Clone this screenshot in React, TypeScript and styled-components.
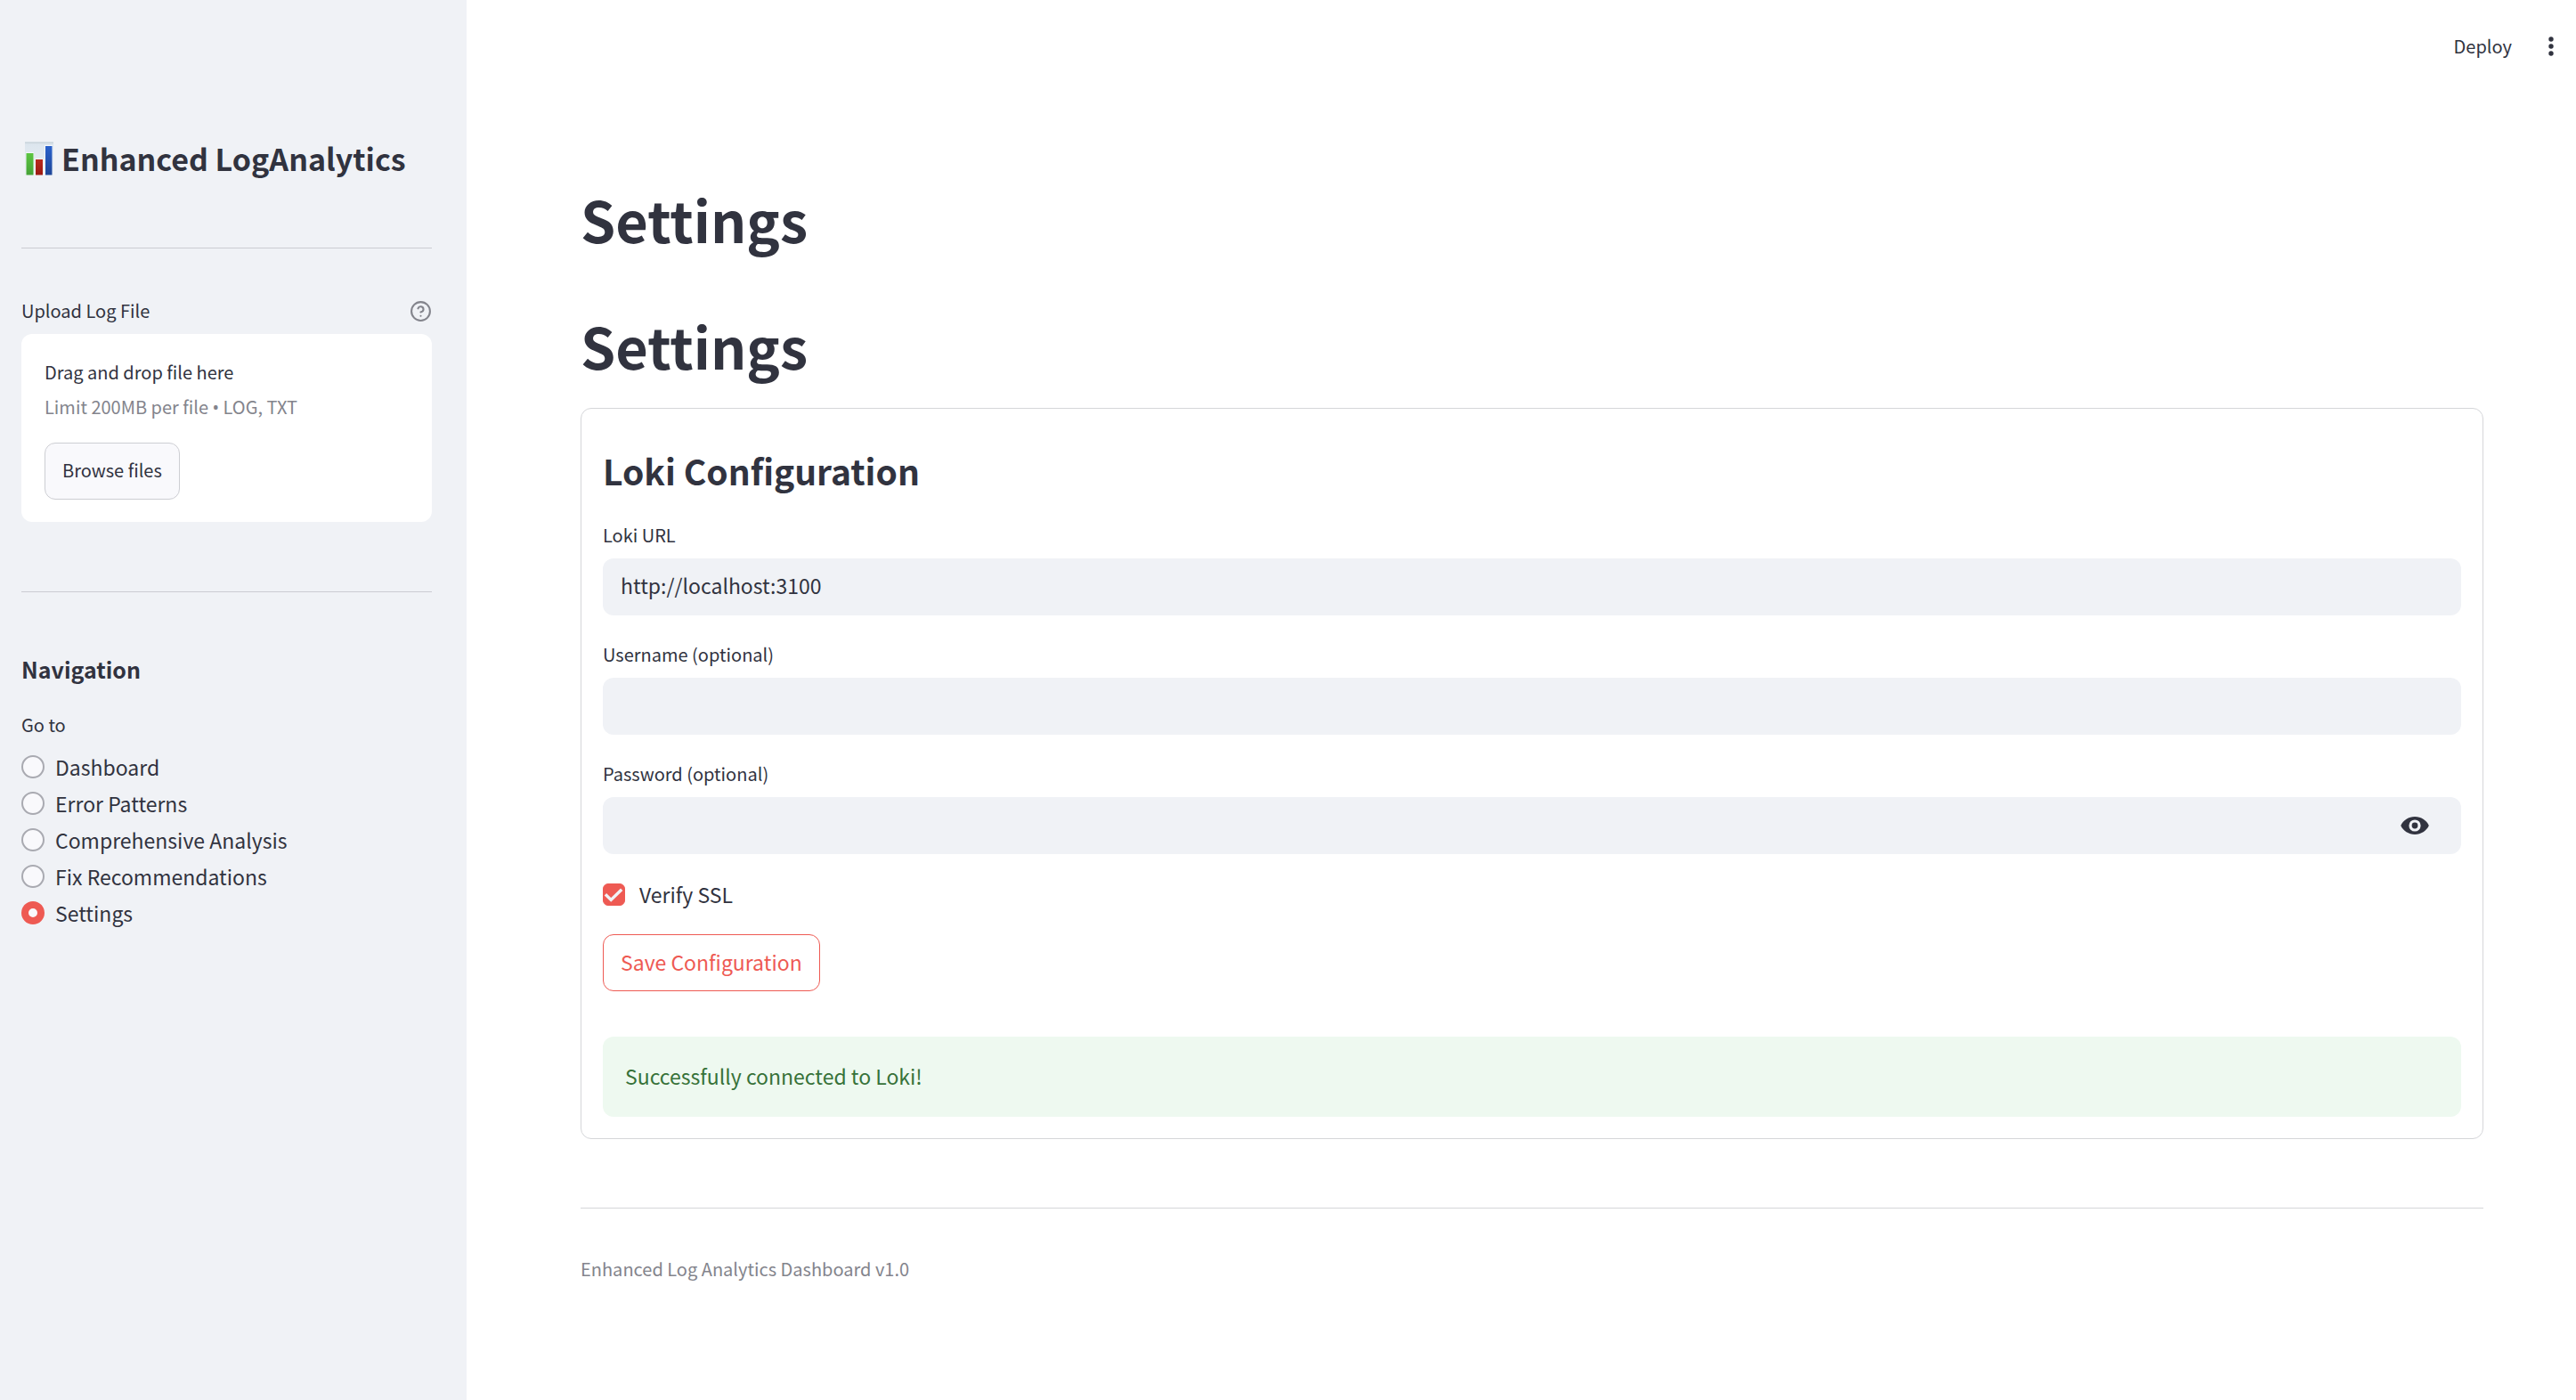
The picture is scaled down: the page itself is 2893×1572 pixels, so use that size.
import React, { useState } from "react";
import styled, { createGlobalStyle } from "styled-components";

const ink = "#31333f";
const muted = "#83848c";
const panel = "#f0f2f6";
const accent = "#ee5a53";
const line = "#d5d6d9";

const GlobalStyle = createGlobalStyle`
  *, *::before, *::after { box-sizing: border-box; }
  body {
    margin: 0;
    background: #ffffff;
    color: ${ink};
    font-family: "Noto Sans CJK SC", "Noto Sans", sans-serif;
    font-size: 23px;
    line-height: 36px;
  }
  h1, h2, h3, p { margin: 0; }
  button, input { font: inherit; color: inherit; }
`;

const Shell = styled.div`
  display: flex;
  min-height: 100vh;
`;

const Sidebar = styled.aside`
  flex: none;
  width: 524px;
  padding: 155px 39px 64px 24px;
  background: ${panel};
`;

const Brand = styled.h2`
  display: flex;
  align-items: center;
  gap: 9px;
  padding-left: 4px;
  font-size: 34px;
  line-height: 46px;
  font-weight: 600;
  white-space: nowrap;
`;

const Rule = styled.hr<{ $above: number; $below: number; $dark?: boolean }>`
  height: 1px;
  border: 0;
  margin: ${(p) => p.$above}px 0 ${(p) => p.$below}px;
  background: ${(p) => (p.$dark ? "#cbccd2" : line)};
`;

const LabelRow = styled.div`
  display: flex;
  justify-content: space-between;
  align-items: center;
  margin-bottom: 9px;
`;

const SmallLabel = styled.label`
  font-size: 20px;
  line-height: 34px;
`;

const IconButton = styled.button`
  display: flex;
  align-items: center;
  justify-content: center;
  padding: 0;
  border: 0;
  background: none;
  cursor: pointer;
`;

const Dropzone = styled.section`
  display: flex;
  flex-direction: column;
  align-items: flex-start;
  gap: 5px;
  padding: 26px 26px 25px;
  border-radius: 12px;
  background: #ffffff;
`;

const SmallText = styled.p<{ $muted?: boolean }>`
  font-size: 20px;
  line-height: 34px;
  color: ${(p) => (p.$muted ? muted : ink)};
`;

const Bullet = styled.span`
  font-family: "Noto Sans", sans-serif;
  line-height: 1;
`;

const Button = styled.button<{ $small?: boolean; $accent?: boolean }>`
  height: 64px;
  padding: 0 19px 3px;
  border: 1px solid ${(p) => (p.$accent ? accent : "#cdced3")};
  border-radius: 12px;
  background: ${(p) => (p.$accent ? "#ffffff" : "#f9f9fc")};
  color: ${(p) => (p.$accent ? accent : ink)};
  font-size: ${(p) => (p.$small ? 20 : 23)}px;
  cursor: pointer;
`;

const BrowseRow = styled.div`
  padding-top: 18px;
`;

const NavTitle = styled.h3`
  margin-bottom: 28px;
  font-size: 25px;
  line-height: 36px;
  font-weight: 600;
`;

const RadioGroup = styled.fieldset`
  display: flex;
  flex-direction: column;
  gap: 5px;
  margin: 0;
  padding: 0;
  border: 0;
`;

const Legend = styled.legend`
  margin-bottom: 12px;
  padding: 0;
  font-size: 20px;
  line-height: 34px;
`;

const Choice = styled.label<{ $gap: number }>`
  display: flex;
  align-items: center;
  align-self: flex-start;
  gap: ${(p) => p.$gap}px;
  cursor: pointer;
`;

const Radio = styled.input`
  appearance: none;
  width: 26px;
  height: 26px;
  margin: 0;
  border: 2px solid #a9aab1;
  border-radius: 50%;
  background: #f9f9fc;
  &:checked { border: 8px solid ${accent}; }
`;

const Main = styled.main`
  flex: 1;
  min-width: 0;
`;

const Toolbar = styled.header`
  display: flex;
  justify-content: flex-end;
  align-items: center;
  gap: 28px;
  height: 104px;
  padding-right: 12px;
`;

const DeployButton = styled(IconButton)`
  font-size: 20px;
  line-height: 34px;
`;

const MenuButton = styled(IconButton)`
  width: 32px;
  height: 32px;
`;

const Content = styled.div`
  padding: 70px 104px 64px 128px;
`;

const PageTitle = styled.h1`
  padding: 30px 0 28px;
  font-size: 63px;
  line-height: 84px;
  font-weight: 700;
`;

const Card = styled.form`
  display: flex;
  flex-direction: column;
  gap: 27px;
  padding: 24px;
  border: 1px solid ${line};
  border-radius: 12px;
`;

const CardTitle = styled.h2`
  padding: 21px 0 5px;
  font-size: 39px;
  line-height: 48px;
  font-weight: 600;
`;

const Field = styled.div`
  display: flex;
  flex-direction: column;
  gap: 9px;
`;

const InputBox = styled.div`
  display: flex;
  align-items: center;
  height: 64px;
  padding-right: 36px;
  border-radius: 12px;
  background: ${panel};
`;

const TextInput = styled.input`
  flex: 1;
  min-width: 0;
  height: 64px;
  padding: 0 20px 4px;
  border: 0;
  outline: 0;
  background: none;
`;

const CheckBox = styled.span`
  display: grid;
  place-items: center;
  > * { grid-area: 1 / 1; }
  svg { pointer-events: none; }
`;

const CheckInput = styled.input`
  appearance: none;
  width: 25px;
  height: 25px;
  margin: 0;
  border: 1px solid #a3a4ab;
  border-radius: 6px;
  &:checked { border-color: ${accent}; background: ${accent}; }
`;

const Actions = styled.div`
  display: flex;
`;

const Alert = styled.div`
  margin-top: 24px;
  padding: 26px 25px 28px;
  border-radius: 12px;
  background: #eef9f0;
  color: #377239;
`;

function ChartIcon() {
  return (
    <svg width="32" height="38" viewBox="0 0 32 38" aria-hidden="true">
      <defs>
        <linearGradient id="sheet" x1="0" y1="0" x2="0" y2="1">
          <stop offset="0" stopColor="#d6dfe6" />
          <stop offset="0.1" stopColor="#dde6ee" />
          <stop offset="1" stopColor="#ebf0f5" />
        </linearGradient>
        <linearGradient id="green" x1="0" y1="0" x2="0" y2="1">
          <stop offset="0" stopColor="#5cc542" />
          <stop offset="1" stopColor="#45a236" />
        </linearGradient>
        <linearGradient id="red" x1="0" y1="0" x2="0" y2="1">
          <stop offset="0" stopColor="#b92a1e" />
          <stop offset="1" stopColor="#9c1a12" />
        </linearGradient>
        <linearGradient id="blue" x1="0" y1="0" x2="0" y2="1">
          <stop offset="0" stopColor="#2a62cc" />
          <stop offset="1" stopColor="#1f4697" />
        </linearGradient>
      </defs>
      <rect width="32" height="38" fill="url(#sheet)" />
      <path d="M0 1.500h32" stroke="#cbd5dc" />
      <rect x="1" y="12" width="9" height="26" fill="#f4f8fa" />
      <rect x="11" y="19" width="10" height="19" fill="#f4f8fa" />
      <rect x="22" y="4" width="9" height="34" fill="#f4f8fa" />
      <rect x="1.500" y="13" width="8" height="24.500" fill="url(#green)" />
      <rect x="12" y="20" width="8" height="17.500" fill="url(#red)" />
      <rect x="23" y="5" width="7.500" height="32.500" fill="url(#blue)" />
    </svg>
  );
}

function HelpIcon() {
  return (
    <svg width="25" height="25" viewBox="0 0 24 24" fill="none" stroke="#83848c" strokeWidth="2" strokeLinecap="round" strokeLinejoin="round" aria-hidden="true">
      <circle cx="12" cy="12" r="10" />
      <path d="M9.09 9a3 3 0 0 1 5.83 1c0 2-3 3-3 3" />
      <path d="M12 17h.01" />
    </svg>
  );
}

function DotsIcon() {
  return (
    <svg width="6" height="22" viewBox="0 0 6 22" fill={ink} aria-hidden="true">
      <circle cx="3" cy="3" r="2.7" />
      <circle cx="3" cy="11" r="2.7" />
      <circle cx="3" cy="19" r="2.7" />
    </svg>
  );
}

function EyeIcon() {
  return (
    <svg width="32" height="20" viewBox="0 0 32 20" aria-hidden="true">
      <path d="M0.200 10C3 4 9 0.100 16 0.100S29 4 31.800 10C29 16 23 19.900 16 19.900S3 16 0.200 10Z" fill={ink} />
      <circle cx="16" cy="10" r="6.600" fill={panel} />
      <circle cx="16" cy="10" r="3.400" fill={ink} />
    </svg>
  );
}

function TickIcon() {
  return (
    <svg width="25" height="25" viewBox="0 0 25 25" fill="none" stroke={panel} strokeWidth="3.400" aria-hidden="true">
      <path d="M2.900 12.300L9.200 18.400L21.200 6.700" />
    </svg>
  );
}

const pages = [
  "Dashboard",
  "Error Patterns",
  "Comprehensive Analysis",
  "Fix Recommendations",
  "Settings",
];

export default function App() {
  const [page, setPage] = useState("Settings");
  const [url, setUrl] = useState("http://localhost:3100");
  const [verify, setVerify] = useState(true);
  const [reveal, setReveal] = useState(false);

  return (
    <>
      <GlobalStyle />
      <Shell>
        <Sidebar>
          <Brand>
            <ChartIcon />
            Enhanced LogAnalytics
          </Brand>
          <Rule $above={77} $below={53} $dark />
          <LabelRow>
            <SmallLabel htmlFor="browse">Upload Log File</SmallLabel>
            <IconButton type="button" aria-label="Help">
              <HelpIcon />
            </IconButton>
          </LabelRow>
          <Dropzone>
            <SmallText>Drag and drop file here</SmallText>
            <SmallText $muted>
              Limit 200MB per file <Bullet>•</Bullet> LOG, TXT
            </SmallText>
            <BrowseRow>
              <Button id="browse" type="button" $small>
                Browse files
              </Button>
            </BrowseRow>
          </Dropzone>
          <Rule $above={78} $below={68} $dark />
          <NavTitle>Navigation</NavTitle>
          <RadioGroup>
            <Legend>Go to</Legend>
            {pages.map((name) => (
              <Choice key={name} $gap={12}>
                <Radio
                  type="radio"
                  name="page"
                  value={name}
                  checked={page === name}
                  onChange={() => setPage(name)}
                />
                {name}
              </Choice>
            ))}
          </RadioGroup>
        </Sidebar>
        <Main>
          <Toolbar>
            <DeployButton type="button">Deploy</DeployButton>
            <MenuButton type="button" aria-label="Main menu">
              <DotsIcon />
            </MenuButton>
          </Toolbar>
          <Content>
            <PageTitle>Settings</PageTitle>
            <PageTitle>Settings</PageTitle>
            <Card onSubmit={(e) => e.preventDefault()}>
              <CardTitle>Loki Configuration</CardTitle>
              <Field>
                <SmallLabel htmlFor="url">Loki URL</SmallLabel>
                <InputBox>
                  <TextInput id="url" type="text" value={url} onChange={(e) => setUrl(e.target.value)} />
                </InputBox>
              </Field>
              <Field>
                <SmallLabel htmlFor="username">Username (optional)</SmallLabel>
                <InputBox>
                  <TextInput id="username" type="text" autoComplete="off" />
                </InputBox>
              </Field>
              <Field>
                <SmallLabel htmlFor="password">Password (optional)</SmallLabel>
                <InputBox>
                  <TextInput id="password" type={reveal ? "text" : "password"} autoComplete="off" />
                  <IconButton type="button" aria-label="Show password" onClick={() => setReveal(!reveal)}>
                    <EyeIcon />
                  </IconButton>
                </InputBox>
              </Field>
              <Choice $gap={16}>
                <CheckBox>
                  <CheckInput type="checkbox" checked={verify} onChange={(e) => setVerify(e.target.checked)} />
                  {verify && <TickIcon />}
                </CheckBox>
                Verify SSL
              </Choice>
              <Actions>
                <Button type="submit" $accent>
                  Save Configuration
                </Button>
              </Actions>
              <Alert role="status">Successfully connected to Loki!</Alert>
            </Card>
            <Rule $above={77} $below={51} />
            <SmallText $muted>Enhanced Log Analytics Dashboard v1.0</SmallText>
          </Content>
        </Main>
      </Shell>
    </>
  );
}
